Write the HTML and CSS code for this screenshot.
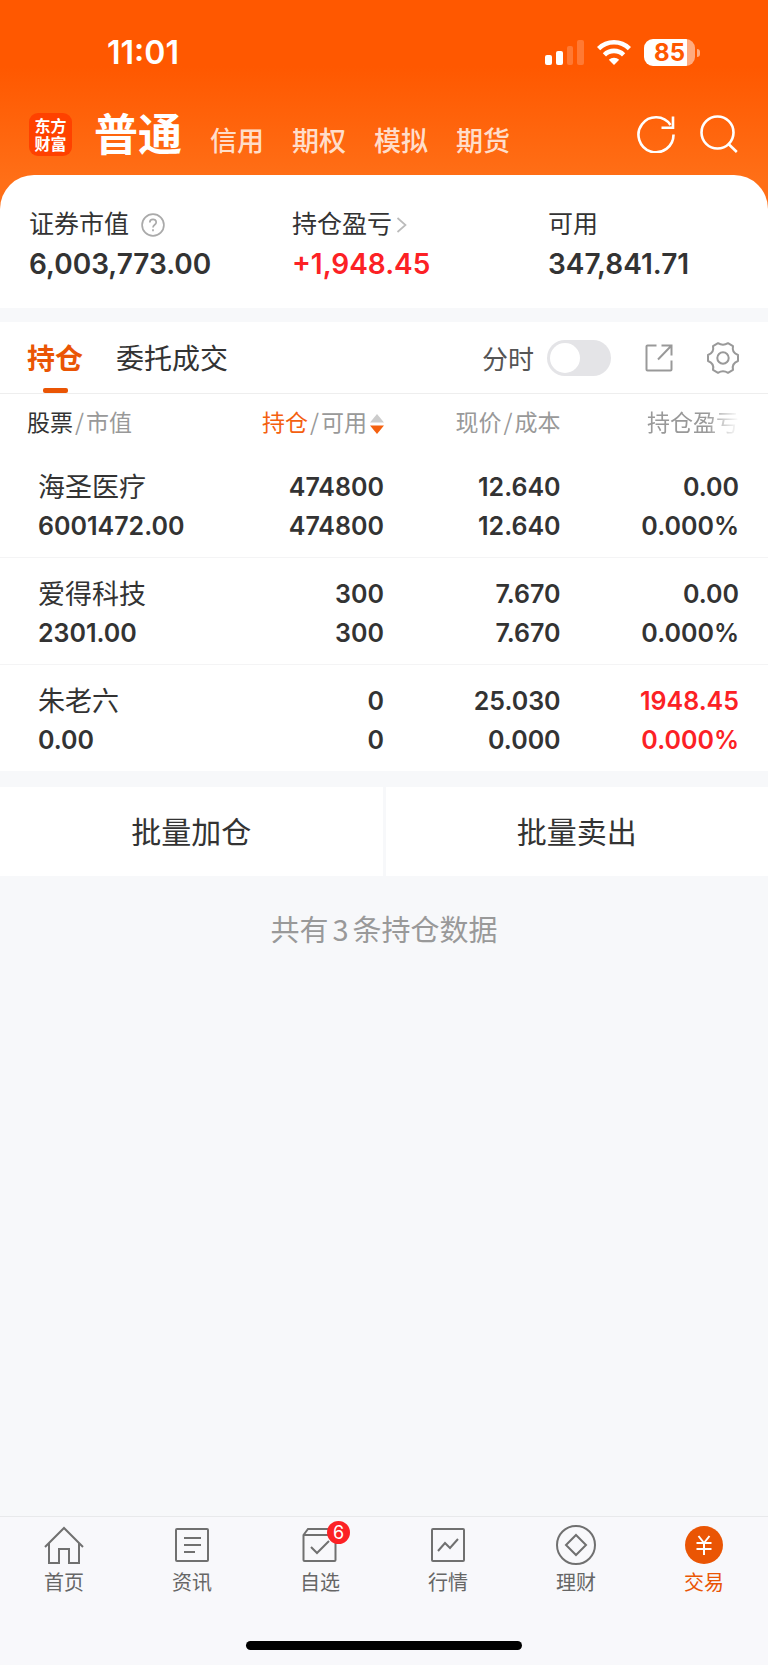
FILE: index.html
```html
<!DOCTYPE html>
<html lang="zh-CN">
<head>
    <meta charset="UTF-8">
    <meta name="viewport" content="width=device-width, initial-scale=1">
    <title>交易 - 持仓</title>
    <link rel="stylesheet" href="styles.css">
</head>
<body>
<!--头部-->
<header class="header">
    <div class="status">
        <span class="time">11:01</span>
        <div class="status-icons">
            <svg width="39" height="25" viewBox="0 0 39 25" fill="#fff">
                <rect x="0" y="15" width="7" height="10" rx="2"/>
                <rect x="11" y="11" width="7" height="14" rx="2"/>
                <rect x="22" y="6" width="6" height="19" rx="2" opacity=".2"/>
                <rect x="32" y="0" width="7" height="25" rx="2" opacity=".2"/>
            </svg>
            <svg width="34" height="25" viewBox="0 0 34 25" fill="none" stroke="#fff" stroke-width="4.6">
                <path d="M1.600 8.600a22 22 0 0 1 30.800 0"/>
                <path d="M7.400 14.800a13.700 13.700 0 0 1 19.200 0"/>
                <path d="M17 25l-5.200-5.200a7.600 7.600 0 0 1 10.400 0z" fill="#fff" stroke="none"/>
            </svg>
            <div class="battery"><span>85</span></div>
        </div>
    </div>
    <div class="top">
        <div class="logo">东方<br>财富</div>
        <nav class="account">
            <a class="on" href="#">普通</a>
            <a href="#">信用</a>
            <a href="#">期权</a>
            <a href="#">模拟</a>
            <a href="#">期货</a>
        </nav>
        <button class="icon-btn" type="button" aria-label="刷新">
            <svg width="38" height="38" viewBox="0 0 38 38" fill="none" stroke="#fff" stroke-width="2.6">
                <path d="M36.500 19.500A17.500 17.500 0 1 1 33.500 10"/>
                <path d="M36 1.500v11.300H24.500"/>
            </svg>
        </button>
        <button class="icon-btn" type="button" aria-label="搜索">
            <svg width="38" height="38" viewBox="0 0 38 38" fill="none" stroke="#fff" stroke-width="2.6">
                <circle cx="17.500" cy="17.500" r="16"/>
                <path d="M28 28.500l8.800 8.500"/>
            </svg>
        </button>
    </div>
</header>

<!--资产-->
<section class="summary">
    <div class="item">
        <div class="label">证券市值
            <svg class="help" width="24" height="24" viewBox="0 0 24 24" fill="none" stroke="#aaa" stroke-width="1.700">
                <circle cx="12" cy="12" r="10.900"/>
                <path d="M8.800 9.500c0-4.200 6.400-4.200 6.400-.3 0 2.600-3.200 2.500-3.200 5.300"/>
                <path d="M12 16.200v2"/>
            </svg>
        </div>
        <div class="value">6,003,773.00</div>
    </div>
    <div class="item">
        <div class="label">持仓盈亏
            <svg width="11" height="16" viewBox="0 0 11 16" fill="none" stroke="#bbb" stroke-width="1.700">
                <path d="M1.500 1l8 7-8 7"/>
            </svg>
        </div>
        <div class="value red">+1,948.45</div>
    </div>
    <div class="item">
        <div class="label">可用</div>
        <div class="value">347,841.71</div>
    </div>
</section>

<!--持仓列表-->
<section class="panel">
    <div class="tabs">
        <a class="tab current" href="#">持仓</a>
        <a class="tab" href="#">委托成交</a>
        <label class="switch-label" for="minute">分时</label>
        <input class="switch" type="checkbox" id="minute">
        <button class="icon-btn" type="button" aria-label="分享">
            <svg width="28" height="28" viewBox="0 0 28 28" fill="none" stroke="#999" stroke-width="2">
                <path d="M11.500 1.500H2.500a1 1 0 0 0-1 1v23a1 1 0 0 0 1 1h23a1 1 0 0 0 1-1v-9"/>
                <path d="M16.500 1.500h10v10M26.500 1.500L13 15.500"/>
            </svg>
        </button>
        <button class="icon-btn" type="button" aria-label="设置">
            <svg width="32" height="32" viewBox="0 0 32 32" fill="none" stroke="#999" stroke-width="2" stroke-linejoin="round">
                <path d="M11 1.200Q16 4.200 21 1.200L26 4.200Q24.500 10.500 31 13V19Q24.500 21.500 26 27.800L21 30.800Q16 27.800 11 30.800L6 27.800Q7.500 21.500 1 19V13Q7.500 10.500 6 4.200Z"/>
                <circle cx="16" cy="16" r="5.700"/>
            </svg>
        </button>
    </div>
    <table class="list">
        <thead>
        <tr>
            <th class="c1"><b>股票</b><i>/</i>市值</th>
            <th class="c2"><em>持仓</em><i>/</i>可用<svg class="sort" width="14" height="20" viewBox="0 0 14 20">
                <path d="M7 0l7 8.500H0z" fill="#ccc"/>
                <path d="M7 20l7-8.500H0z" fill="#f4600f"/>
            </svg></th>
            <th class="c3">现价<i>/</i>成本</th>
            <th class="c4"><span class="fade">持仓盈亏</span></th>
        </tr>
        </thead>
        <tbody>
        <tr>
            <td><span class="name">海圣医疗</span>6001472.00</td>
            <td>474800<br>474800</td>
            <td>12.640<br>12.640</td>
            <td>0.00<br>0.000%</td>
        </tr>
        <tr>
            <td><span class="name">爱得科技</span>2301.00</td>
            <td>300<br>300</td>
            <td>7.670<br>7.670</td>
            <td>0.00<br>0.000%</td>
        </tr>
        <tr>
            <td><span class="name">朱老六</span>0.00</td>
            <td>0<br>0</td>
            <td>25.030<br>0.000</td>
            <td class="red">1948.45<br>0.000%</td>
        </tr>
        </tbody>
    </table>
</section>

<div class="batch">
    <button type="button">批量加仓</button>
    <button type="button">批量卖出</button>
</div>
<p class="total">共有<span>3</span>条持仓数据</p>

<!--底部导航-->
<footer class="footer">
    <nav class="menu">
        <a href="#">
            <svg width="40" height="40" viewBox="0 0 40 40">
                <path d="M1 22L20 3l19 19M5 18v20h10V24h10v14h10V18"/>
            </svg>
            首页
        </a>
        <a href="#">
            <svg width="40" height="40" viewBox="0 0 40 40">
                <rect x="4" y="4" width="32" height="32" rx="1"/>
                <path d="M12 13h17M12 20h17M12 27h11"/>
            </svg>
            资讯
        </a>
        <a href="#">
            <span class="pic">
                <svg width="40" height="40" viewBox="0 0 40 40">
                    <path d="M3.500 10v25a1 1 0 0 0 1 1h30a1 1 0 0 0 1-1V10l-4-6H8zM3.500 10h32M11 22l6 6 12-12"/>
                </svg>
                <span class="badge">6</span>
            </span>
            自选
        </a>
        <a href="#">
            <svg width="40" height="40" viewBox="0 0 40 40">
                <rect x="4" y="4" width="32" height="32" rx="1"/>
                <path d="M10 26l7-8 5 5 8-9"/>
            </svg>
            行情
        </a>
        <a href="#">
            <svg width="40" height="40" viewBox="0 0 40 40">
                <circle cx="20" cy="20" r="19"/>
                <path d="M20 10l10 10-10 10-10-10z"/>
            </svg>
            理财
        </a>
        <a class="active" href="#">
            <svg width="40" height="40" viewBox="0 0 40 40">
                <circle cx="20" cy="20" r="19" fill="#ea5504" stroke="none"/>
                <path d="M14.500 11l5.500 7 5.500-7M20 18v12M12.500 18h15M12.500 24h15" stroke="#fff"/>
            </svg>
            交易
        </a>
    </nav>
    <div class="home-bar"></div>
</footer>
</body>
</html>
```
FILE: styles.css
```css
* {
    padding: 0;
    margin: 0;
    box-sizing: border-box;
}
body {
    display: flex;
    flex-direction: column;
    min-height: 100vh;
    color: #333;
    background-color: #f7f8fa;
    font-family: Inter, "Noto Sans CJK SC", sans-serif;
}
a {
    color: inherit;
    text-decoration: none;
}
button {
    border: none;
    background: none;
    color: inherit;
    font-family: inherit;
    cursor: pointer;
}
svg {
    display: block;
    flex: none;
}
.red {
    color: #fc2125;
}

/* 头部 */
.header {
    padding-bottom: 56px;
    background: linear-gradient(#ff5800 30%, #ff6f17 82%);
}
.status {
    display: flex;
    align-items: center;
    justify-content: space-between;
    height: 104px;
    padding: 0 68px 0 107px;
    color: #fff;
}
.time {
    font-size: 32px;
    font-weight: 600;
}
.status-icons {
    display: flex;
    align-items: center;
    gap: 13px;
}
.battery {
    position: relative;
    width: 51px;
    height: 27px;
    margin-right: 5px;
    border-radius: 9px;
    background: linear-gradient(90deg, #fff 84%, #ffab80 84%);
    color: #ff5800;
    font-size: 24px;
    font-weight: 700;
    line-height: 27px;
    text-align: center;
}
.battery::after {
    content: "";
    position: absolute;
    left: 53px;
    top: 10px;
    width: 3px;
    height: 8px;
    border-radius: 0 3px 3px 0;
    background-color: #ffab80;
}
.top {
    display: flex;
    align-items: center;
    gap: 25px;
    height: 60px;
    padding: 0 30px 0 29px;
}
.logo {
    width: 43px;
    height: 43px;
    padding-top: 4px;
    border-radius: 9px;
    background-color: #ff4100;
    color: #fff;
    font-size: 16px;
    font-weight: 700;
    line-height: 18px;
    text-align: center;
}
.account {
    display: flex;
    flex: 1;
    align-items: baseline;
    gap: 28px;
    margin-left: -3px;
    padding-top: 8px;
    color: rgba(255, 255, 255, .8);
    font-size: 27px;
    font-weight: 500;
    line-height: 60px;
}
.account .on {
    color: #fff;
    font-size: 44px;
    font-weight: 700;
}

/* 资产 */
.summary {
    display: flex;
    margin-top: -45px;
    padding: 31px 29px 22px;
    border-radius: 34px 34px 0 0;
    background-color: #fff;
}
.item {
    flex: 263 1 0;
}
.item:nth-child(2) {
    flex-grow: 256;
}
.item:last-child {
    flex-grow: 191;
}
.label {
    display: flex;
    align-items: center;
    gap: 4px;
    font-size: 25px;
    line-height: 37px;
}
.help {
    margin-left: 8px;
}
.value {
    font-size: 28px;
    font-weight: 600;
    line-height: 43px;
}

/* 持仓列表 */
.panel {
    margin-top: 14px;
    background-color: #fff;
}
.tabs {
    display: flex;
    align-items: center;
    height: 72px;
    padding: 0 29px 0 27px;
    border-bottom: 1px solid #eee;
}
.tab {
    display: flex;
    flex-direction: column;
    align-items: center;
    height: 71px;
    margin-right: 33px;
    font-size: 28px;
    line-height: 74px;
}
.tab::after {
    content: "";
    width: 25px;
    height: 5px;
    margin-top: -8px;
    border-radius: 2px;
}
.current {
    color: #ea5504;
    font-weight: 700;
}
.current::after {
    background-color: #ea5504;
}
.switch-label {
    margin-left: auto;
    color: #555;
    font-size: 26px;
}
.switch {
    width: 64px;
    height: 36px;
    margin-left: 13px;
    padding: 3px;
    border-radius: 18px;
    background-color: #e4e4e7;
    appearance: none;
    cursor: pointer;
}
.switch::before {
    content: "";
    display: block;
    width: 30px;
    height: 30px;
    border-radius: 50%;
    background-color: #fff;
}
.switch:checked {
    background-color: #ea5504;
}
.switch:checked::before {
    margin-left: auto;
}
.tabs .icon-btn {
    margin-left: 34px;
}
.list {
    width: 100%;
    border-collapse: collapse;
    table-layout: fixed;
}
.list th {
    height: 57px;
    padding-bottom: 4px;
    color: #999;
    font-size: 23px;
    font-weight: 400;
    text-align: right;
}
.list b {
    color: #333;
    font-weight: 400;
}
.list em {
    color: #f4600f;
    font-style: normal;
}
.list i {
    padding: 0 2px;
    font-family: "Noto Sans CJK SC", sans-serif;
    font-style: normal;
}
.list .c1 {
    width: 27%;
    padding-left: 27px;
    text-align: left;
}
.list .c2 {
    width: 23%;
}
.list .c3 {
    width: 23%;
}
.list .c4 {
    width: 27%;
    padding-right: 29px;
}
.sort {
    display: inline-block;
    margin-left: 3px;
    vertical-align: -3px;
}
.fade {
    -webkit-mask-image: linear-gradient(90deg, #000 65%, transparent);
    mask-image: linear-gradient(90deg, #000 65%, transparent);
}
.list td {
    padding: 17px 0 11px;
    font-size: 25px;
    font-weight: 600;
    line-height: 39px;
    text-align: right;
    vertical-align: top;
}
.list td:first-child {
    padding-left: 38px;
    text-align: left;
}
.list td:last-child {
    padding-right: 29px;
}
.list tbody tr + tr {
    border-top: 1px solid #f4f4f5;
}
.name {
    display: block;
    font-size: 27px;
    font-weight: 400;
}

/* 批量操作 */
.batch {
    display: flex;
    gap: 3px;
    margin-top: 16px;
}
.batch button {
    flex: 1;
    height: 89px;
    padding-bottom: 4px;
    background-color: #fff;
    font-size: 30px;
}
.total {
    padding-top: 31px;
    color: #999;
    font-size: 29px;
    line-height: 42px;
    text-align: center;
}
.total span {
    padding: 0 4px;
    font-family: "Noto Sans CJK SC", sans-serif;
}

/* 底部导航 */
.footer {
    margin-top: auto;
    border-top: 1px solid #e8e9eb;
    background-color: #f8f8fb;
}
.menu {
    display: flex;
    padding-top: 8px;
}
.menu a {
    display: flex;
    flex: 1;
    flex-direction: column;
    align-items: center;
    gap: 3px;
    color: #666;
    font-size: 20px;
    line-height: 30px;
}
.menu svg {
    fill: none;
    stroke: #707070;
    stroke-width: 2;
}
.menu .active {
    color: #ea5504;
}
.pic {
    position: relative;
}
.badge {
    position: absolute;
    top: -4px;
    right: -10px;
    width: 23px;
    height: 23px;
    border-radius: 50%;
    background-color: #fc2125;
    color: #fff;
    font-size: 18px;
    line-height: 23px;
    text-align: center;
}
.home-bar {
    width: 36%;
    height: 9px;
    margin: 43px auto 15px;
    border-radius: 5px;
    background-color: #000;
}
```
